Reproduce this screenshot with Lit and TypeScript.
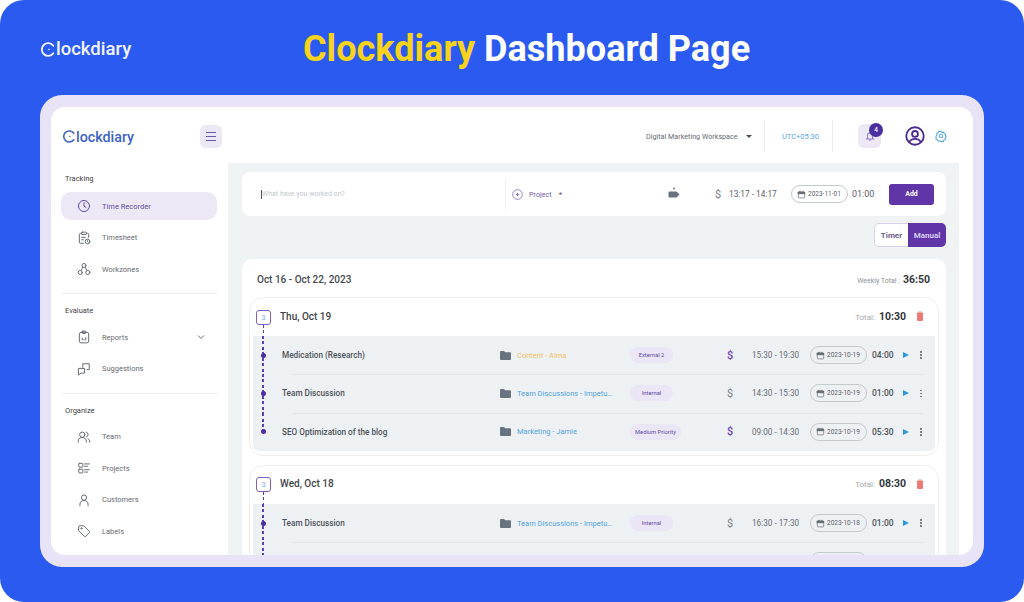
import {LitElement, html, svg, css} from 'lit';
import {customElement} from 'lit/decorators.js';

interface Entry {
  title: string;
  project: string;
  color: string;
  tag: string;
  billed: boolean;
  time: string;
  date: string;
  dur: string;
}

interface Day {
  label: string;
  total: string;
  entries: Entry[];
  open?: boolean;
}

// the last row of Wed only peeks in at the bottom edge, so it carries no text
const peek: Entry = {title: '', project: '', color: '', tag: '', billed: false, time: '', date: '', dur: ''};

const days: Day[] = [
  {
    label: 'Thu, Oct 19',
    total: '10:30',
    entries: [
      {title: 'Medication (Research)', project: 'Content - Alma', color: '#f3c064', tag: 'External 2', billed: true, time: '15:30 - 19:30', date: '2023-10-19', dur: '04:00'},
      {title: 'Team Discussion', project: 'Team Discussions - Impetus Team', color: '#4fa3e3', tag: 'Internal', billed: false, time: '14:30 - 15:30', date: '2023-10-19', dur: '01:00'},
      {title: 'SEO Optimization of the blog', project: 'Marketing - Jamie', color: '#4fa3e3', tag: 'Medium Priority', billed: true, time: '09:00 - 14:30', date: '2023-10-19', dur: '05:30'},
    ],
  },
  {
    label: 'Wed, Oct 18',
    total: '08:30',
    open: true,
    entries: [
      {title: 'Team Discussion', project: 'Team Discussions - Impetus Team', color: '#4fa3e3', tag: 'Internal', billed: false, time: '16:30 - 17:30', date: '2023-10-18', dur: '01:00'},
      peek,
    ],
  },
];

const ico = (body: unknown, size = 14, width = 1.7) => html`<svg width=${size} height=${size} viewBox="0 0 24 24" fill="none" stroke="currentColor" stroke-width=${width} stroke-linecap="round" stroke-linejoin="round">${body}</svg>`;

const icons = {
  clock: svg`<circle cx="12" cy="12" r="9.5"/><path d="M12 6.5V12l3.5 2.5"/>`,
  sheet: svg`<path d="M8 4H6a2 2 0 0 0-2 2v13a2 2 0 0 0 2 2h5"/><path d="M16 4h2a2 2 0 0 1 2 2v5"/><rect x="8" y="2" width="8" height="4" rx="1"/><path d="M8 11h6M8 15h3"/><circle cx="18" cy="18" r="4"/><path d="M18 16.5V18l1 1"/>`,
  zones: svg`<circle cx="12" cy="6" r="3.5"/><circle cx="5.5" cy="18" r="3.5"/><circle cx="18.5" cy="18" r="3.5"/><path d="M10 9l-3 5.500M14 9l3 5.500"/>`,
  report: svg`<rect x="4" y="4" width="16" height="18" rx="3"/><rect x="9" y="2" width="6" height="4" rx="1"/><path d="M9 17v-3M12 17v-1M15 17v-4"/>`,
  suggest: svg`<path d="M10 9V3h11v10h-4"/><path d="M3 11h10v8H7l-4 3z"/>`,
  team: svg`<circle cx="9" cy="8" r="4.500"/><path d="M2 21v-1a7 7 0 0 1 14 0v1"/><path d="M16 3.500a4.500 4.500 0 0 1 0 8.500M19 15a7 7 0 0 1 3 5.500V21"/>`,
  projects: svg`<rect x="3" y="4" width="7" height="6.500" rx="1"/><rect x="3" y="14" width="7" height="6.500" rx="1"/><path d="M13 5h8M13 9h5M13 15h8M13 19h5"/>`,
  customer: svg`<circle cx="12" cy="8" r="4.500"/><path d="M5 22v-2a7 7 0 0 1 14 0v2"/>`,
  label: svg`<path d="M3 4.500A1.500 1.500 0 0 1 4.500 3h7L21 12.500a2 2 0 0 1 0 2.800L15.300 21a2 2 0 0 1-2.800 0L3 11.500z"/><circle cx="7.500" cy="7.500" r="1"/>`,
  calendar: svg`<rect x="3.500" y="5" width="17" height="16" rx="2"/><path d="M8 3v4M16 3v4"/><path d="M3.500 6h17v4h-17z" fill="currentColor"/>`,
  gear: svg`<circle cx="12" cy="12" r="3.500"/><path d="M12 2.500l2.200 2.400 3.200-.600 1 3.100 3.100 1-.600 3.200 1.600 1.900-2.200 2.400.600 3.200-3.100 1-1 3-3.300-.7-2.300 1.500-2.200-2.400-3.200.6-1-3.100-3.100-1 .6-3.200L2 12l2.100-2.400-.6-3.200 3.100-1 1-3.100 3.200.6z"/>`,
};

const folder = html`<svg width="11" height="9" viewBox="0 0 22 18"><path fill="#69737f" d="M0 2a2 2 0 0 1 2-2h6l2.500 2.500H20a2 2 0 0 1 2 2V16a2 2 0 0 1-2 2H2a2 2 0 0 1-2-2z"/></svg>`;

// the C of the logo is a mark: an open ring with a dot in it
const mark = (size: number) => html`<svg width=${size} height=${size} viewBox="0 0 20 20" fill="none" stroke="currentColor" stroke-width="2.400" stroke-linecap="round"><path d="M16.500 5a8.500 8.500 0 1 0 0 10"/><circle cx="10.500" cy="10" r="1.100" fill="currentColor" stroke="none"/></svg>`;

@customElement('app-root')
export class AppRoot extends LitElement {
  static styles = css`
    :host {
      display: block;
      width: 1024px;
      height: 602px;
      background: #fff;
      font-family: Roboto, "Liberation Sans", sans-serif;
      color: #4a4f57;
    }

    .page {
      height: 602px;
      box-sizing: border-box;
      background: #2b5af0;
      border-radius: 24px;
      padding: 0 40px;
    }

    .banner {
      height: 95px;
      box-sizing: border-box;
      padding: 3px 0 0 1px;
      display: flex;
      align-items: center;
    }

    .banner .logo {
      width: 262px;
      color: #f2f5ff;
      font-size: 18.500px;
    }

    .banner h1 {
      margin: 0;
      font-size: 36.100px;
      font-weight: 700;
      color: #fff;
      white-space: nowrap;
    }

    .banner h1 span {
      color: #f7d31b;
    }

    .logo {
      display: flex;
      align-items: center;
      font-weight: 500;
    }

    .frame {
      height: 472px;
      box-sizing: border-box;
      padding: 12px 11px;
      background: #e9e3f7;
      border-radius: 22px;
    }

    .inner {
      height: 448px;
      background: #fff;
      border-radius: 14px;
      overflow: hidden;
      display: flex;
      flex-direction: column;
    }

    /* top bar */
    .top {
      height: 56px;
      flex: none;
      display: flex;
      align-items: center;
    }

    .brand {
      width: 171px;
      flex: none;
      box-sizing: border-box;
      padding-left: 12px;
      display: flex;
      align-items: center;
      justify-content: space-between;
      margin-top: 3px;
    }

    .brand .logo {
      color: #3b64c4;
      font-size: 14.300px;
    }

    .burger {
      width: 22px;
      height: 23px;
      border-radius: 6px;
      background: #ece8f6;
      display: flex;
      flex-direction: column;
      align-items: center;
      justify-content: center;
      gap: 2.500px;
    }

    .burger i {
      width: 10px;
      height: 1.200px;
      background: #6a5aa5;
    }

    .top-right {
      flex: 1;
      display: flex;
      align-items: center;
      padding-left: 424px;
      margin-top: 2px;
    }

    .workspace {
      width: 118px;
      flex: none;
      box-sizing: border-box;
      font-size: 7.200px;
      color: #666b72;
      display: flex;
      align-items: center;
      gap: 8px;
      white-space: nowrap;
    }

    .caret {
      width: 0;
      height: 0;
      border-left: 3px solid transparent;
      border-right: 3px solid transparent;
      border-top: 3px solid #4a4f57;
    }

    .utc {
      width: 69px;
      height: 32px;
      flex: none;
      box-sizing: border-box;
      border: solid #e9edef;
      border-width: 0 1px;
      padding-left: 4px;
      font-size: 7.500px;
      color: #58a6df;
      display: flex;
      align-items: center;
      justify-content: center;
    }

    .bell {
      position: relative;
      width: 23px;
      height: 24px;
      flex: none;
      margin-left: 25px;
      border-radius: 6px;
      background: #ece8f6;
      color: #8d7cc4;
      display: flex;
      align-items: center;
      justify-content: center;
    }

    .bell b {
      position: absolute;
      top: -1px;
      right: -2px;
      width: 14px;
      height: 14px;
      border-radius: 50%;
      background: #4b2fa0;
      color: #fff;
      font-size: 6.500px;
      font-weight: 500;
      display: flex;
      align-items: center;
      justify-content: center;
    }

    .avatar {
      margin-left: 24px;
      color: #4b2a93;
      display: flex;
    }

    .gear {
      margin-left: 10px;
      color: #5aa9e0;
      display: flex;
    }

    /* lower area */
    .body {
      flex: 1;
      min-height: 0;
      display: flex;
    }

    .side {
      width: 177px;
      flex: none;
      box-sizing: border-box;
      padding: 11px 11px 0 10px;
    }

    .side section + section {
      border-top: 1px solid #eceef0;
      margin-top: 10px;
      padding-top: 12px;
    }

    .side h4 {
      margin: 0 0 7px 4px;
      font-size: 7.500px;
      line-height: 10px;
      font-weight: 400;
      color: #3f4248;
    }

    .side section:first-child h4 {
      margin-bottom: 8px;
    }

    .item {
      height: 28px;
      margin-bottom: 3.500px;
      box-sizing: border-box;
      padding: 0 12px 0 16px;
      border-radius: 10px;
      display: flex;
      align-items: center;
      gap: 11px;
      font-size: 7.500px;
      color: #666b72;
    }

    .item.active {
      background: #ece8f6;
      color: #5f4b9e;
    }

    .item svg {
      flex: none;
    }

    .item span {
      flex: 1;
    }

    .main {
      flex: none;
      width: 731px;
      box-sizing: border-box;
      padding: 9px 13px 0 14px;
      background: #eff3f4;
      overflow: hidden;
    }

    .entry {
      height: 44px;
      box-sizing: border-box;
      padding: 0 12px 0 19px;
      background: #fff;
      border-radius: 8px;
      display: flex;
      align-items: center;
      color: #5b6068;
    }

    .what {
      width: 244px;
      height: 30px;
      flex: none;
      border-right: 1px solid #eef1f2;
      display: flex;
      align-items: center;
      font-size: 7px;
      color: #c4c8cc;
    }

    .what i {
      width: 1px;
      height: 9px;
      background: #555;
    }

    .proj {
      width: 162px;
      flex: none;
      box-sizing: border-box;
      padding-left: 6px;
      display: flex;
      align-items: center;
      gap: 6px;
      font-size: 7.200px;
      color: #6f5bb0;
    }

    .proj em {
      margin-left: 1px;
      font-style: normal;
      color: #555;
      font-size: 8px;
    }

    .tagicon {
      width: 47px;
      flex: none;
      display: flex;
    }

    .dollar {
      font-size: 11px;
      color: #7b8188;
    }

    .dollar.on {
      color: #6a43b5;
      font-weight: 500;
    }

    .entry .dollar {
      width: 14px;
      flex: none;
    }

    .entry .time {
      width: 62px;
      flex: none;
      font-size: 8.300px;
      white-space: nowrap;
    }

    .date {
      width: 57px;
      height: 18px;
      flex: none;
      box-sizing: border-box;
      border: 1px solid #c4c9cd;
      border-radius: 9px;
      padding-left: 5px;
      display: flex;
      align-items: center;
      gap: 2px;
      font-size: 6.500px;
      color: #5b6068;
      white-space: nowrap;
    }

    .date svg {
      flex: none;
    }

    .entry .dur {
      width: 41px;
      flex: none;
      box-sizing: border-box;
      padding-left: 4px;
      font-size: 9px;
    }

    .add {
      width: 45px;
      height: 21px;
      flex: none;
      border-radius: 3px;
      background: #5f35a8;
      color: #fff;
      font-size: 7px;
      font-weight: 700;
      display: flex;
      align-items: center;
      justify-content: center;
    }

    .toggle {
      margin-top: 7px;
      display: flex;
      justify-content: flex-end;
      font-size: 8px;
      font-weight: 700;
    }

    .toggle span {
      height: 24px;
      box-sizing: border-box;
      display: flex;
      align-items: center;
      justify-content: center;
    }

    .toggle .off {
      width: 34px;
      background: #fff;
      color: #6a5f8c;
      border: 1px solid #d9d3ea;
      border-right: 0;
      border-radius: 5px 0 0 5px;
    }

    .toggle .on {
      width: 38px;
      background: #5f35a8;
      color: #d9cdf2;
      border-radius: 0 5px 5px 0;
    }

    .week {
      margin-top: 12px;
      padding: 0 7px;
      background: #fff;
      border-radius: 10px 10px 0 0;
    }

    .week-head {
      height: 38px;
      box-sizing: border-box;
      padding: 3px 9px 0 8px;
      display: flex;
      align-items: center;
      justify-content: space-between;
      font-size: 10px;
      font-weight: 500;
      color: #454a52;
    }

    .sum {
      display: flex;
      align-items: baseline;
      gap: 3px;
      font-size: 7px;
      font-weight: 400;
      color: #8d9298;
    }

    .sum b {
      font-size: 10.500px;
      font-weight: 700;
      color: #33373d;
    }

    .day {
      border: 1px solid #edeff0;
      border-radius: 14px;
      padding: 0 3px 4px;
      margin-bottom: 9px;
    }

    .day-head {
      height: 38px;
      box-sizing: border-box;
      padding: 0 11px 2px 3px;
      display: flex;
      align-items: center;
      gap: 9px;
      font-size: 10px;
      font-weight: 500;
      color: #3f444b;
    }

    .day-head .sum {
      margin-left: auto;
      margin-right: 1px;
      font-size: 8px;
      color: #a4a8ad;
      gap: 4px;
    }

    .badge {
      position: relative;
      width: 15px;
      height: 15px;
      margin-top: 2px;
      box-sizing: border-box;
      border: 1px solid #7d62bd;
      border-radius: 3px;
      font-size: 7.500px;
      font-weight: 400;
      color: #7fb0de;
      display: flex;
      align-items: center;
      justify-content: center;
    }

    .badge::after {
      content: '';
      position: absolute;
      left: 5.750px;
      top: 14px;
      width: 1.500px;
      height: 12px;
      background: repeating-linear-gradient(#5b3fa8 0 3px, transparent 3px 5.500px);
    }

    .trash {
      color: #ea7a75;
      display: flex;
    }

    .rows {
      background: #eef1f4;
      border-radius: 0 0 6px 6px;
    }

    .row {
      position: relative;
      height: 38.330px;
      display: grid;
      grid-template-columns: 20px 9px 218px 130px 97px 25px 58px 62px 31px 15px 1fr;
      align-items: center;
      font-size: 8.200px;
      color: #4d5259;
    }

    .row + .row::before {
      content: '';
      position: absolute;
      left: 40px;
      right: 12px;
      top: 0;
      border-top: 1px solid #e3e7ea;
    }

    .rail {
      position: relative;
      grid-column: 1 / 3;
      align-self: stretch;
      width: 20px;
      display: flex;
      align-items: center;
      justify-content: center;
    }

    .rail::before {
      content: '';
      position: absolute;
      left: 9.250px;
      top: 0;
      bottom: 0;
      width: 1.500px;
      background: repeating-linear-gradient(#5b3fa8 0 3px, transparent 3px 5.500px);
    }

    .row.last .rail::before {
      bottom: 50%;
    }

    .rail i {
      position: relative;
      width: 5px;
      height: 5px;
      border-radius: 50%;
      background: #4b2fa0;
    }

    .title {
      font-weight: 500;
      white-space: nowrap;
    }

    .project {
      display: flex;
      align-items: center;
      gap: 6px;
      font-size: 7.500px;
      white-space: nowrap;
      overflow: hidden;
    }

    .project span {
      width: 96px;
      overflow: hidden;
      text-overflow: ellipsis;
    }

    .pill {
      justify-self: start;
      height: 16px;
      min-width: 33px;
      padding: 0 5px;
      border-radius: 8px;
      background: #eae6f6;
      color: #5f4b9e;
      font-size: 5.800px;
      display: flex;
      align-items: center;
      justify-content: center;
    }

    .row .time {
      white-space: nowrap;
      color: #666b72;
    }

    .row .dur {
      font-weight: 500;
      font-size: 8.500px;
    }

    .play {
      width: 0;
      height: 0;
      border-left: 6px solid #2f97dd;
      border-top: 3.500px solid transparent;
      border-bottom: 3.500px solid transparent;
    }

    .more {
      display: flex;
      flex-direction: column;
      gap: 1.500px;
      margin-left: 2px;
    }

    .more i {
      width: 1.500px;
      height: 1.500px;
      background: #7b8188;
    }
  `;

  private renderItem(icon: unknown, label: string, active = false, chevron = false) {
    return html`
      <div class="item ${active ? 'active' : ''}">
        ${ico(icon, 14)}
        <span>${label}</span>
        ${chevron
          ? html`<svg width="8" height="6" viewBox="0 0 8 6" fill="none" stroke="#666b72" stroke-width="1"><path d="M1 1.500l3 3 3-3"/></svg>`
          : ''}
      </div>
    `;
  }

  private renderDate(date: string) {
    return html`<div class="date">${ico(icons.calendar, 9)}${date}</div>`;
  }

  private renderRow(entry: Entry, last: boolean) {
    if (!entry.title) {
      return html`
        <div class="row">
          <div class="rail"><i></i></div>
          <div></div><div></div><div></div><div></div><div></div>
          ${this.renderDate('')}
        </div>
      `;
    }
    return html`
      <div class="row ${last ? 'last' : ''}">
        <div class="rail"><i></i></div>
        <div class="title">${entry.title}</div>
        <div class="project" style="color: ${entry.color}">${folder}<span>${entry.project}</span></div>
        <div class="pill">${entry.tag}</div>
        <div class="dollar ${entry.billed ? 'on' : ''}">$</div>
        <div class="time">${entry.time}</div>
        ${this.renderDate(entry.date)}
        <div class="dur">${entry.dur}</div>
        <div class="play"></div>
        <div class="more"><i></i><i></i><i></i></div>
      </div>
    `;
  }

  private renderDay(day: Day) {
    return html`
      <div class="day">
        <div class="day-head">
          <div class="badge">3</div>
          ${day.label}
          <div class="sum">Total: <b>${day.total}</b></div>
          <div class="trash">
            <svg width="8" height="10" viewBox="0 0 8 10"><path fill="currentColor" d="M.500 1.800h7v.8H7V9a1 1 0 0 1-1 1H2a1 1 0 0 1-1-1V2.600H.500zM2.500.500h3v1h-3z"/></svg>
          </div>
        </div>
        <div class="rows">
          ${day.entries.map((e, i) => this.renderRow(e, !day.open && i === day.entries.length - 1))}
        </div>
      </div>
    `;
  }

  render() {
    return html`
      <div class="page">
        <div class="banner">
          <div class="logo">${mark(15)}lockdiary</div>
          <h1><span>Clockdiary</span> Dashboard Page</h1>
        </div>
        <div class="frame">
          <div class="inner">
            <div class="top">
              <div class="brand">
                <div class="logo">${mark(13)}lockdiary</div>
                <div class="burger"><i></i><i></i><i></i></div>
              </div>
              <div class="top-right">
                <div class="workspace">Digital Marketing Workspace <span class="caret"></span></div>
                <div class="utc">UTC+05:30</div>
                <div class="bell">
                  <svg width="10" height="10" viewBox="0 0 24 24" fill="none" stroke="currentColor" stroke-width="2.500"><path d="M6 17V11a6 6 0 0 1 12 0v6l2 2H4zM10 22h4"/></svg>
                  <b>4</b>
                </div>
                <div class="avatar">
                  <svg width="20" height="20" viewBox="0 0 24 24" fill="none" stroke="currentColor" stroke-width="2.200"><circle cx="12" cy="12" r="10.500"/><circle cx="12" cy="9.500" r="3.500"/><path d="M5 19.500c1.500-3 4-4 7-4s5.500 1 7 4"/></svg>
                </div>
                <div class="gear">${ico(icons.gear, 12, 2.2)}</div>
              </div>
            </div>
            <div class="body">
              <div class="side">
                <section>
                  <h4>Tracking</h4>
                  ${this.renderItem(icons.clock, 'Time Recorder', true)}
                  ${this.renderItem(icons.sheet, 'Timesheet')}
                  ${this.renderItem(icons.zones, 'Workzones')}
                </section>
                <section>
                  <h4>Evaluate</h4>
                  ${this.renderItem(icons.report, 'Reports', false, true)}
                  ${this.renderItem(icons.suggest, 'Suggestions')}
                </section>
                <section>
                  <h4>Organize</h4>
                  ${this.renderItem(icons.team, 'Team')}
                  ${this.renderItem(icons.projects, 'Projects')}
                  ${this.renderItem(icons.customer, 'Customers')}
                  ${this.renderItem(icons.label, 'Labels')}
                </section>
              </div>
              <div class="main">
                <div class="entry">
                  <div class="what"><i></i>What have you worked on?</div>
                  <div class="proj">
                    <svg width="11" height="11" viewBox="0 0 24 24" fill="none" stroke="currentColor" stroke-width="1.600"><circle cx="12" cy="12" r="10.500"/><path d="M12 8v8M8 12h8"/></svg>
                    Project <em>*</em>
                  </div>
                  <div class="tagicon">
                    <svg width="12" height="14" viewBox="0 0 12 14"><circle cx="6" cy="1.500" r="1" fill="#69737f"/><path fill="#69737f" d="M1.500 4.500h7l3 3-3 3h-7a1 1 0 0 1-1-1v-4a1 1 0 0 1 1-1z"/></svg>
                  </div>
                  <div class="dollar">$</div>
                  <div class="time">13:17 - 14:17</div>
                  ${this.renderDate('2023-11-01')}
                  <div class="dur">01:00</div>
                  <div class="add">Add</div>
                </div>
                <div class="toggle"><span class="off">Timer</span><span class="on">Manual</span></div>
                <div class="week">
                  <div class="week-head">
                    Oct 16 - Oct 22, 2023
                    <div class="sum">Weekly Total : <b>36:50</b></div>
                  </div>
                  ${days.map((d) => this.renderDay(d))}
                </div>
              </div>
            </div>
          </div>
        </div>
      </div>
    `;
  }
}
